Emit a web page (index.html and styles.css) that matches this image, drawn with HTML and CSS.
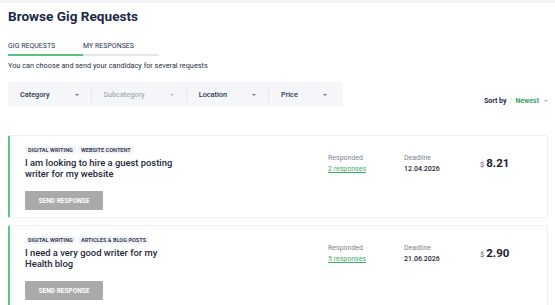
FILE: index.html
```html
<!DOCTYPE html>
<html lang="en">
<head>
    <meta charset="UTF-8">
    <meta name="viewport" content="width=device-width, initial-scale=1.0">
    <title>Browse Gig Requests</title>
    <link rel="stylesheet" href="styles.css">
</head>
<body>
    <div class="topstrip"></div>
    <div class="page">
        <h1 class="page-title">Browse Gig Requests</h1>

        <div class="tabs">
            <div class="tab active">GIG REQUESTS</div>
            <div class="tab">MY RESPONSES</div>
        </div>
        <p class="intro">You can choose and send your candidacy for several requests</p>

        <div class="toolbar">
            <div class="filters">
                <div class="filter">Category <span class="caret"></span></div>
                <div class="filter disabled">Subcategory <span class="caret"></span></div>
                <div class="filter">Location <span class="caret"></span></div>
                <div class="filter">Price <span class="caret"></span></div>
            </div>
            <div class="sort">Sort by <span class="slash">/</span> <span class="sort-value">Newest</span> <span class="caret"></span></div>
        </div>

        <div class="gig">
            <div class="gig-main">
                <div class="tags">
                    <span class="tag">Digital writing</span>
                    <span class="tag">Website content</span>
                </div>
                <h3 class="gig-title">I am looking to hire a guest posting writer for my website</h3>
                <button class="send-btn">Send response</button>
            </div>
            <div class="gig-col">
                <span class="label">Responded</span>
                <a class="responses" href="#">2 responses</a>
            </div>
            <div class="gig-col">
                <span class="label">Deadline</span>
                <span class="value">12.04.2026</span>
            </div>
            <div class="gig-price"><span class="cur">$</span>8.21</div>
        </div>

        <div class="gig">
            <div class="gig-main">
                <div class="tags">
                    <span class="tag">Digital writing</span>
                    <span class="tag">Articles &amp; blog posts</span>
                </div>
                <h3 class="gig-title">I need a very good writer for my Health blog</h3>
                <button class="send-btn">Send response</button>
            </div>
            <div class="gig-col">
                <span class="label">Responded</span>
                <a class="responses" href="#">5 responses</a>
            </div>
            <div class="gig-col">
                <span class="label">Deadline</span>
                <span class="value">21.06.2026</span>
            </div>
            <div class="gig-price"><span class="cur">$</span>2.90</div>
        </div>
    </div>
</body>
</html>
```

FILE: styles.css
```css
* { margin: 0; padding: 0; box-sizing: border-box; }

body {
    font-family: Roboto, "Liberation Sans", sans-serif;
    background: #fff;
    color: #1f2a44;
}

.topstrip {
    height: 3px;
    background: #f3f4f7;
}

.page {
    padding: 0 7px 0 8px;
}

.page-title {
    font-size: 13.6px;
    font-weight: 700;
    color: #1b2847;
    margin-top: 4px;
    line-height: 18px;
}

/* tabs */
.tabs {
    display: flex;
    margin-top: 17px;
    width: 151px;
    border-bottom: 2px solid #e4e8ee;
}

.tab {
    font-size: 7px;
    color: #2c3550;
    padding: 0 0 4px;
    width: 75px;
    margin-bottom: -2px;
    border-bottom: 2px solid transparent;
}

.tab.active { border-bottom-color: #58c47f; }

.intro {
    font-size: 7.3px;
    color: #2a2f40;
    margin-top: 5px;
}

/* filters */
.toolbar {
    display: flex;
    justify-content: space-between;
    align-items: flex-end;
    margin-top: 12px;
}

.filters {
    display: flex;
    align-items: center;
    background: #f4f6fa;
    height: 25px;
    width: 335px;
}

.filter {
    display: flex;
    align-items: center;
    gap: 25px;
    padding: 0 12px;
    font-size: 7.3px;
    font-weight: 500;
    color: #2c3550;
    border-right: 1px solid #e6e9ef;
    height: 17px;
}

.filter:last-child { border-right: none; }
.filter.disabled { color: #a7acb6; }

.caret {
    display: inline-block;
    width: 0;
    height: 0;
    border-left: 2.5px solid transparent;
    border-right: 2.5px solid transparent;
    border-top: 2.5px solid #6f7686;
}

.filter.disabled .caret { border-top-color: #b5b9c2; }

.sort {
    font-size: 7px;
    font-weight: 700;
    color: #1f2a44;
    padding-bottom: 2px;
    display: flex;
    align-items: center;
    gap: 3px;
}

.sort .slash { color: #c9ccd3; font-weight: 400; }
.sort .sort-value { color: #33a862; }
.sort .caret { border-top-color: #b0b5bf; margin-left: 2px; }

/* gig cards */
.gig {
    display: grid;
    grid-template-columns: 1fr 76px 76px 52px;
    border: 1px solid #f0f1f3;
    border-left: 2px solid #5cc583;
    padding: 10px 15px 7px 15px;
    margin-top: 28px;
    border-radius: 2px;
}

.gig + .gig { margin-top: 7px; }

.tags {
    display: flex;
    gap: 2px;
}

.tag {
    font-size: 5.6px;
    font-weight: 700;
    text-transform: uppercase;
    color: #3a4257;
    background: #f2f4f7;
    padding: 1px 3px;
    line-height: 6px;
}

.gig-title {
    font-size: 9.4px;
    font-weight: 500;
    color: #23293b;
    line-height: 11px;
    width: 160px;
    margin-top: 3px;
}

.send-btn {
    margin-top: 12px;
    width: 78px;
    height: 19px;
    border: none;
    background: #aaaaaa;
    color: #fff;
    font-family: inherit;
    font-size: 6.5px;
    font-weight: 700;
    text-transform: uppercase;
    border-radius: 1px;
}

.gig-col {
    display: flex;
    flex-direction: column;
    padding-top: 7px;
    font-size: 7px;
    line-height: 11px;
}

.label { color: #7d8391; }
.value { color: #1f2533; font-weight: 500; }

.responses {
    color: #3fae68;
    text-decoration: underline;
}

.gig-price {
    padding-top: 10px;
    font-size: 11.5px;
    font-weight: 700;
    color: #1b2030;
}

.gig-price .cur {
    font-size: 7.5px;
    font-weight: 400;
    color: #5b6170;
    margin-right: 2px;
}
```
